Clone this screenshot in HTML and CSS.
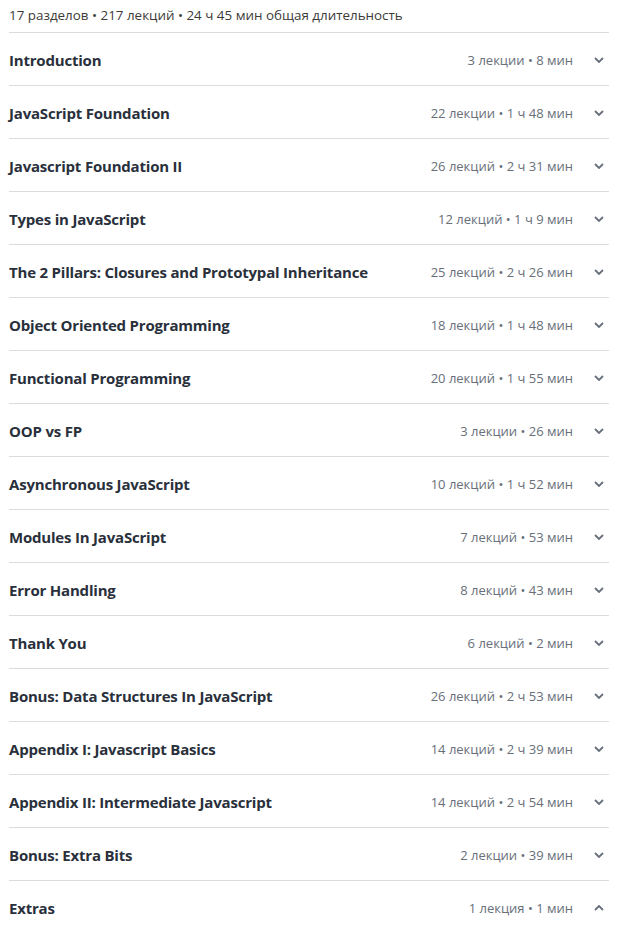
FILE: index.html
```html
<!DOCTYPE html>
<html lang="ru">
  <head>
    <meta charset="UTF-8" />
    <meta name="viewport" content="width=device-width, initial-scale=1.0" />
    <title>Содержание курса</title>
    <link rel="stylesheet" href="styles.css">
  </head>
  <body>
    <div class="curriculum">
      <div class="summary">17 разделов • 217 лекций • 24 ч 45 мин общая длительность</div>

      <div class="section">
        <span class="section-title">Introduction</span>
        <span class="section-meta">3 лекции • 8 мин</span>
        <svg class="chevron" viewBox="0 0 10 6"><path d="M1 1l4 4 4-4" /></svg>
      </div>
      <div class="section">
        <span class="section-title">JavaScript Foundation</span>
        <span class="section-meta">22 лекции • 1 ч 48 мин</span>
        <svg class="chevron" viewBox="0 0 10 6"><path d="M1 1l4 4 4-4" /></svg>
      </div>
      <div class="section">
        <span class="section-title">Javascript Foundation II</span>
        <span class="section-meta">26 лекций • 2 ч 31 мин</span>
        <svg class="chevron" viewBox="0 0 10 6"><path d="M1 1l4 4 4-4" /></svg>
      </div>
      <div class="section">
        <span class="section-title">Types in JavaScript</span>
        <span class="section-meta">12 лекций • 1 ч 9 мин</span>
        <svg class="chevron" viewBox="0 0 10 6"><path d="M1 1l4 4 4-4" /></svg>
      </div>
      <div class="section">
        <span class="section-title">The 2 Pillars: Closures and Prototypal Inheritance</span>
        <span class="section-meta">25 лекций • 2 ч 26 мин</span>
        <svg class="chevron" viewBox="0 0 10 6"><path d="M1 1l4 4 4-4" /></svg>
      </div>
      <div class="section">
        <span class="section-title">Object Oriented Programming</span>
        <span class="section-meta">18 лекций • 1 ч 48 мин</span>
        <svg class="chevron" viewBox="0 0 10 6"><path d="M1 1l4 4 4-4" /></svg>
      </div>
      <div class="section">
        <span class="section-title">Functional Programming</span>
        <span class="section-meta">20 лекций • 1 ч 55 мин</span>
        <svg class="chevron" viewBox="0 0 10 6"><path d="M1 1l4 4 4-4" /></svg>
      </div>
      <div class="section">
        <span class="section-title">OOP vs FP</span>
        <span class="section-meta">3 лекции • 26 мин</span>
        <svg class="chevron" viewBox="0 0 10 6"><path d="M1 1l4 4 4-4" /></svg>
      </div>
      <div class="section">
        <span class="section-title">Asynchronous JavaScript</span>
        <span class="section-meta">10 лекций • 1 ч 52 мин</span>
        <svg class="chevron" viewBox="0 0 10 6"><path d="M1 1l4 4 4-4" /></svg>
      </div>
      <div class="section">
        <span class="section-title">Modules In JavaScript</span>
        <span class="section-meta">7 лекций • 53 мин</span>
        <svg class="chevron" viewBox="0 0 10 6"><path d="M1 1l4 4 4-4" /></svg>
      </div>
      <div class="section">
        <span class="section-title">Error Handling</span>
        <span class="section-meta">8 лекций • 43 мин</span>
        <svg class="chevron" viewBox="0 0 10 6"><path d="M1 1l4 4 4-4" /></svg>
      </div>
      <div class="section">
        <span class="section-title">Thank You</span>
        <span class="section-meta">6 лекций • 2 мин</span>
        <svg class="chevron" viewBox="0 0 10 6"><path d="M1 1l4 4 4-4" /></svg>
      </div>
      <div class="section">
        <span class="section-title">Bonus: Data Structures In JavaScript</span>
        <span class="section-meta">26 лекций • 2 ч 53 мин</span>
        <svg class="chevron" viewBox="0 0 10 6"><path d="M1 1l4 4 4-4" /></svg>
      </div>
      <div class="section">
        <span class="section-title">Appendix I: Javascript Basics</span>
        <span class="section-meta">14 лекций • 2 ч 39 мин</span>
        <svg class="chevron" viewBox="0 0 10 6"><path d="M1 1l4 4 4-4" /></svg>
      </div>
      <div class="section">
        <span class="section-title">Appendix II: Intermediate Javascript</span>
        <span class="section-meta">14 лекций • 2 ч 54 мин</span>
        <svg class="chevron" viewBox="0 0 10 6"><path d="M1 1l4 4 4-4" /></svg>
      </div>
      <div class="section">
        <span class="section-title">Bonus: Extra Bits</span>
        <span class="section-meta">2 лекции • 39 мин</span>
        <svg class="chevron" viewBox="0 0 10 6"><path d="M1 1l4 4 4-4" /></svg>
      </div>
      <div class="section open">
        <span class="section-title">Extras</span>
        <span class="section-meta">1 лекция • 1 мин</span>
        <svg class="chevron" viewBox="0 0 10 6"><path d="M1 5l4-4 4 4" /></svg>
      </div>
    </div>
  </body>
</html>
```

FILE: styles.css
```css
body {
  margin: 0;
  background: #fff;
  font-family: "Open Sans", "Noto Sans", sans-serif;
}
.curriculum {
  width: 600px;
  margin-left: 9px;
}
.summary {
  height: 32px;
  line-height: 30px;
  font-size: 13.4px;
  color: #3c3b37;
  border-bottom: 1px solid #dcdcd8;
}
.section {
  display: flex;
  align-items: center;
  box-sizing: border-box;
  height: 53px;
  padding-top: 1px;
  padding-right: 5px;
  border-bottom: 1px solid #dcdcd8;
}
.section:last-child {
  border-bottom: none;
}
.section-title {
  flex: 1;
  font-size: 15px;
  font-weight: 700;
  color: #29303b;
  letter-spacing: -0.2px;
}
.section-meta {
  font-size: 13px;
  color: #686f7a;
  margin-right: 21px;
}
.chevron {
  width: 10px;
  height: 6px;
  fill: none;
  stroke: #686f7a;
  stroke-width: 1.8;
}
```
